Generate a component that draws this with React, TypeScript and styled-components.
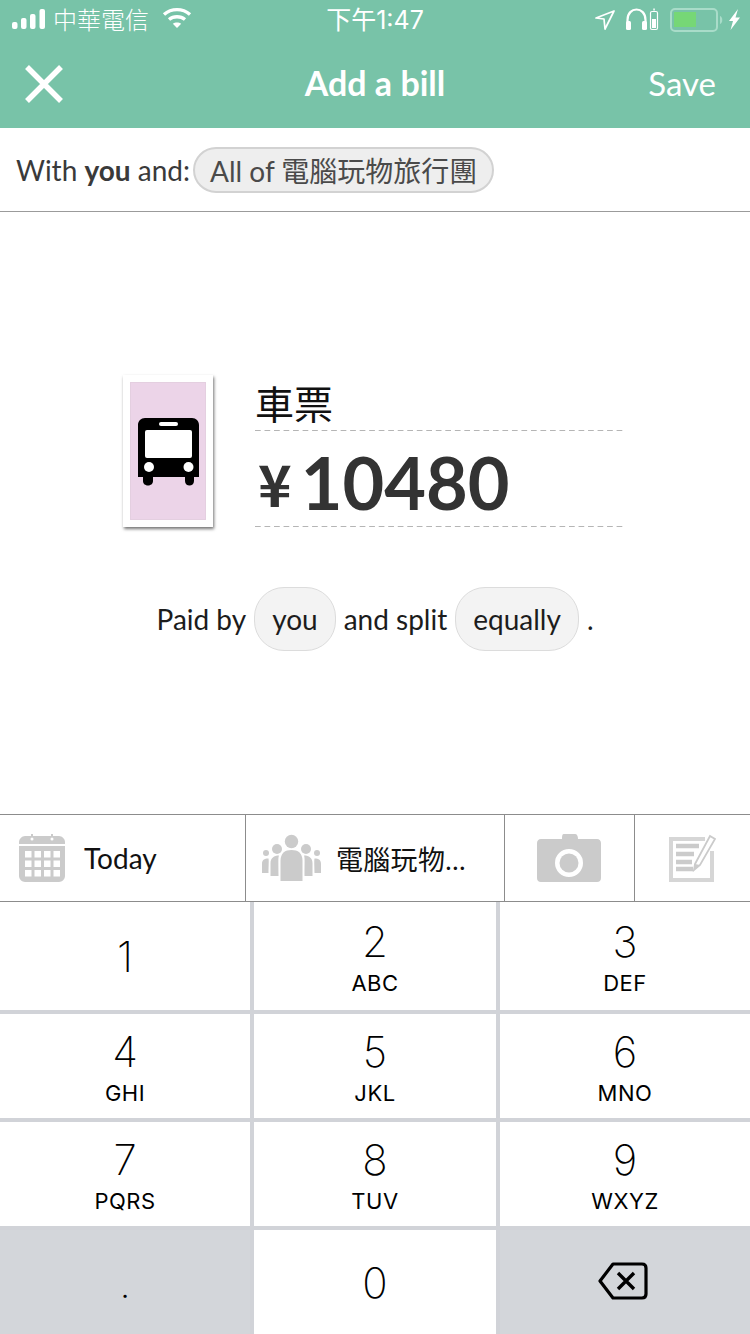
import React from 'react'
import styled, { createGlobalStyle } from 'styled-components'

const CJK = '"Noto Sans CJK TC"'

const GlobalStyle = createGlobalStyle`
  html, body {
    margin: 0;
    padding: 0;
    background: #fff;
    font-family: Lato, ${CJK}, sans-serif;
  }
`

const Page = styled.div`
  width: 750px;
  height: 1334px;
  display: flex;
  flex-direction: column;
  overflow: hidden;
`

const Header = styled.header`
  height: 128px;
  flex: none;
  background: #78c3a8;
  color: #fff;
`

const StatusBar = styled.div`
  height: 40px;
  display: grid;
  grid-template-columns: 1fr auto 1fr;
  align-items: center;
  padding: 0 12px;
`

const StatusLeft = styled.div`
  display: flex;
  align-items: center;
  gap: 8px;
`

const Carrier = styled.span`
  font-family: ${CJK}, sans-serif;
  font-weight: 300;
  font-size: 24px;
  line-height: 36px;
  margin: 0 6px 2px -1px;
`

const Clock = styled.span`
  font-family: Inter, ${CJK}, sans-serif;
  font-size: 25px;
  font-weight: 400;
  line-height: 36px;
`

const StatusRight = styled.div`
  display: flex;
  justify-content: flex-end;
  align-items: center;
  margin-right: -3px;
`

const NavBar = styled.div`
  height: 88px;
  display: grid;
  grid-template-columns: 1fr auto 1fr;
  align-items: center;
  padding: 0 34px;
`

const CloseButton = styled.span`
  display: flex;
  margin-left: -9px;
`

const Title = styled.h1`
  margin: 0 0 2px;
  font-size: 34px;
  font-weight: 700;
  line-height: 1;
`

const SaveLink = styled.span`
  justify-self: end;
  font-size: 33px;
  font-weight: 400;
  line-height: 1;
  margin-bottom: 2px;
`

const WithRow = styled.div`
  height: 84px;
  box-sizing: border-box;
  flex: none;
  display: flex;
  align-items: center;
  gap: 3px;
  padding: 0 16px;
  border-bottom: 1px solid #9b9b9b;
  font-size: 28px;
  color: #3a3a3a;
`

const GroupChip = styled.span`
  height: 42px;
  display: inline-flex;
  align-items: center;
  padding: 0 15px;
  background: #eeeeee;
  border: 2px solid #d2d2d2;
  border-radius: 23px;
  font-size: 28px;
  color: #4a4a4a;
  white-space: nowrap;
`

const Main = styled.main`
  height: 602px;
  box-sizing: border-box;
  flex: none;
  display: flex;
  flex-direction: column;
  align-items: center;
  padding-top: 163px;
`

const BillRow = styled.div`
  display: flex;
  gap: 42px;
  align-items: flex-start;
  width: 500px;
  margin-right: 4px;
`

const Thumb = styled.div`
  width: 76px;
  height: 138px;
  flex: none;
  padding: 7px;
  background: #fff;
  box-shadow: 1px 2px 3px rgba(0, 0, 0, 0.55);
`

const ThumbInner = styled.div`
  height: 100%;
  display: flex;
  align-items: center;
  justify-content: center;
  padding-top: 2px;
  box-sizing: border-box;
  background: #ecd4e8;
  outline: 1px solid #e4cfe0;
  outline-offset: -1px;
`

const DashedField = styled.div`
  box-sizing: border-box;
  background-image: linear-gradient(to right, #b5b5b5 6px, transparent 6px);
  background-size: 9.526px 1px;
  background-repeat: repeat-x;
  background-position: left bottom;
`

const Fields = styled.div`
  width: 368px;
  display: flex;
  flex-direction: column;
`

const NameField = styled(DashedField)`
  height: 56px;
  font-family: ${CJK}, sans-serif;
  font-size: 39px;
  line-height: 54px;
  color: #111;
`

const AmountField = styled(DashedField)`
  height: 96px;
  display: flex;
  align-items: center;
  padding: 5px 0 0 3px;
  color: #333;
  font-weight: 700;
`

const Currency = styled.span`
  font-family: "Noto Sans CJK JP", sans-serif;
  font-size: 57px;
  font-weight: 700;
  line-height: 1;
  margin: 2px 9px 0 0;
`

const Amount = styled.span`
  font-size: 72px;
  line-height: 1;
`

const SplitRow = styled.div`
  margin-top: 60px;
  display: flex;
  align-items: center;
  gap: 8px;
  font-size: 28px;
  color: #1c1c1c;
`

const SplitChip = styled.span`
  height: 62px;
  display: inline-flex;
  align-items: center;
  padding: 0 17px;
  background: #f3f3f3;
  border: 1px solid #dcdcdc;
  border-radius: 30px;
`

const Toolbar = styled.div`
  height: 88px;
  box-sizing: border-box;
  flex: none;
  display: grid;
  grid-template-columns: 246px 259px 130px 1fr;
  border-top: 1px solid #8c8c8c;
  border-bottom: 1px solid #8c8c8c;
`

const ToolCell = styled.div<{ $center?: boolean }>`
  display: flex;
  align-items: center;
  justify-content: ${p => (p.$center ? 'center' : 'flex-start')};
  border-right: 1px solid #8c8c8c;
  font-size: 28px;
  color: #111;
  white-space: nowrap;
  &:last-child {
    border-right: 0;
  }
`

const DateCell = styled(ToolCell)`
  padding-left: 19px;
  gap: 19px;
`

const GroupCell = styled(ToolCell)`
  padding-left: 16px;
  gap: 15px;
  font-size: 27px;
  letter-spacing: 0.3px;
`

const Keypad = styled.div`
  height: 432px;
  flex: none;
  display: grid;
  grid-template-columns: 250px 242px 250px;
  grid-template-rows: 108px 104px 104px 104px;
  gap: 4px;
  background: #d1d3d8;
`

const Key = styled.div<{ $dark?: boolean }>`
  display: flex;
  flex-direction: column;
  align-items: center;
  justify-content: center;
  padding-top: 2px;
  box-sizing: border-box;
  background: ${p => (p.$dark ? '#d3d6da' : '#fff')};
  color: #000;
  font-family: Inter, sans-serif;
`

const Digit = styled.span`
  font-size: 42px;
  font-weight: 250;
  line-height: 48px;
`

const Letters = styled.span`
  font-size: 22px;
  font-weight: 400;
  line-height: 26px;
  margin-top: 4px;
  letter-spacing: 0.5px;
`

const BackspaceKey = styled(Key)`
  padding: 0 4px 2px 0;
`

const keys = [
  ['1', ''], ['2', 'ABC'], ['3', 'DEF'],
  ['4', 'GHI'], ['5', 'JKL'], ['6', 'MNO'],
  ['7', 'PQRS'], ['8', 'TUV'], ['9', 'WXYZ'],
]

const Signal = () => (
  <svg width="34" height="22" viewBox="0 0 34 22" fill="#fff">
    <rect x="0" y="13" width="5.5" height="7" rx="2" />
    <rect x="9" y="9" width="5.5" height="11" rx="2" />
    <rect x="18" y="5" width="5.5" height="15" rx="2" />
    <rect x="27.5" y="0" width="5.5" height="20" rx="2" />
  </svg>
)

const Wifi = () => (
  <svg width="30" height="22" viewBox="0 0 30 22" fill="none" stroke="#fff" strokeWidth="3.4" style={{ marginBottom: 4, marginLeft: -1 }}>
    <path d="M2 7.5C9.5 1 20.5 1 28 7.5" />
    <path d="M7 12.5C11.5 8.8 18.5 8.8 23 12.5" />
    <path d="M15 21 10.8 16.8C13 15 17 15 19.2 16.8Z" fill="#fff" stroke="none" />
  </svg>
)

const StatusIcons = () => (
  <svg width="146" height="26" viewBox="0 0 146 26" fill="none">
    <path d="M1 11 19 4 10 22 9 12Z" stroke="#fff" strokeWidth="1.7" strokeLinejoin="round" />
    <path d="M32.5 19V13C32.5 -1 50.5 -1 50.5 13V19" stroke="#fff" strokeWidth="2.2" />
    <rect x="31" y="14" width="5" height="9" rx="1.5" fill="#fff" />
    <rect x="47" y="14" width="5" height="9" rx="1.5" fill="#fff" />
    <rect x="55.5" y="4.5" width="7" height="18" rx="1.5" stroke="#fff" strokeWidth="1.2" />
    <rect x="57" y="12" width="4" height="9" fill="#fff" />
    <rect x="58.3" y="1.5" width="1.5" height="2" fill="#fff" />
    <rect x="76" y="2" width="46" height="22" rx="4" stroke="#a9dcc9" strokeWidth="2" />
    <rect x="79" y="5" width="22" height="15" fill="#76d776" />
    <path d="M125 9C128 9.5 128 16.5 125 17Z" fill="#a9dcc9" />
    <path d="M143 2 134 14H138L135.5 23 145 10.5H140.5Z" fill="#fff" />
  </svg>
)

const CloseIcon = () => (
  <svg width="38" height="38" viewBox="0 0 38 38" stroke="#fff" strokeWidth="5.5">
    <path d="M2 2 36 36M36 2 2 36" />
  </svg>
)

const BusIcon = () => (
  <svg width="61" height="68" viewBox="0 0 61 68">
    <path fill="#000" d="M7 0H54C58 0 61 3 61 7V59H56V63C56 69 47 69 47 63V59H15V63C15 69 5 69 5 63V59H0V7C0 3 3 0 7 0Z" />
    <g fill="#fff">
      <rect x="21" y="4" width="19" height="4" rx="2" />
      <rect x="7" y="12" width="47" height="28" rx="2" />
      <circle cx="11" cy="49" r="5" />
      <circle cx="50.5" cy="49" r="5" />
    </g>
  </svg>
)

const CalendarIcon = () => (
  <svg width="46" height="48" viewBox="0 0 46 48" fill="#cbcbcb">
    <path d="M6 2H40C43 2 46 5 46 8V10H0V8C0 5 3 2 6 2Z" />
    <path d="M0 12H46V42C46 45 43 48 40 48H6C3 48 0 45 0 42Z" />
    <rect x="12" y="0" width="2" height="6" />
    <rect x="32" y="0" width="2" height="6" />
    <g fill="#fff">
      {[0, 1, 2, 3].flatMap(c =>
        [0, 1, 2].map(r => (
          <rect key={`${c}-${r}`} x={6 + c * 9.5} y={17 + r * 9.5} width={6.5} height={6.5} />
        )),
      )}
      <circle cx="13" cy="5" r="1.5" />
      <circle cx="33" cy="5" r="1.5" />
    </g>
  </svg>
)

const PeopleIcon = () => (
  <svg width="59" height="48" viewBox="0 0 59 48" fill="#cbcbcb">
    <circle cx="29.5" cy="7.5" r="6.7" />
    <path d="M18.5 47V27C18.5 19 23 16 29.5 16C36 16 40.5 19 40.5 27V47Z" />
    <circle cx="15" cy="15" r="5" />
    <circle cx="44" cy="15" r="5" />
    <path d="M8.5 42V29C8.5 24 12 21.5 17 21.5C16 24 16.5 28 16.5 42Z" />
    <path d="M50.5 42V29C50.5 24 47 21.5 42 21.5C43 24 42.5 28 42.5 42Z" />
    <circle cx="4" cy="19" r="3" />
    <circle cx="55" cy="19" r="3" />
    <path d="M0 39V30C0 26 2 24.5 6.5 24.5C7 27 6.5 33 6.5 39Z" />
    <path d="M59 39V30C59 26 57 24.5 52.5 24.5C52 27 52.5 33 52.5 39Z" />
  </svg>
)

const CameraIcon = () => (
  <svg width="64" height="48" viewBox="0 0 64 48" fill="#cbcbcb" style={{ marginRight: 1 }}>
    <path fillRule="evenodd" d="M27 0H38C40 0 41 2 41 5H60C62.5 5 64 7 64 9V44C64 46.5 62.5 48 60 48H4C1.5 48 0 46.5 0 44V9C0 7 1.5 5 4 5H25C25 2 25 0 27 0ZM32 15A14 14 0 1 0 32 43 14 14 0 1 0 32 15Z" />
    <circle cx="32" cy="29" r="9.5" />
  </svg>
)

const NoteIcon = () => (
  <svg width="47" height="48" viewBox="0 0 47 48" fill="none">
    <path d="M36 5H2V46H43V17" stroke="#d6d6d6" strokeWidth="4" />
    <path d="M7 12H30M7 20H25M7 28H23M7 35H24" stroke="#cbcbcb" strokeWidth="4.5" />
    <path d="M26 30 41 2 46 5 31 31 25 36Z" fill="#fff" stroke="#cbcbcb" strokeWidth="1.8" />
    <path d="M26 30 31 31 25 36Z" fill="#cbcbcb" />
  </svg>
)

const BackspaceIcon = () => (
  <svg width="50" height="38" viewBox="0 0 50 38" fill="none" stroke="#000" strokeWidth="3.2" strokeLinejoin="round">
    <path d="M15 2H44C46.5 2 48 3.5 48 6V32C48 34.5 46.5 36 44 36H15L2 19Z" />
    <path d="M20 11 36 27M36 11 20 27" strokeWidth="3.4" />
  </svg>
)

const App: React.FC = () => {
  return (
    <Page>
      <GlobalStyle />
      <Header>
        <StatusBar>
          <StatusLeft>
            <Signal />
            <Carrier>中華電信</Carrier>
            <Wifi />
          </StatusLeft>
          <Clock>下午1:47</Clock>
          <StatusRight>
            <StatusIcons />
          </StatusRight>
        </StatusBar>
        <NavBar>
          <CloseButton>
            <CloseIcon />
          </CloseButton>
          <Title>Add a bill</Title>
          <SaveLink>Save</SaveLink>
        </NavBar>
      </Header>

      <WithRow>
        <span>
          With <b>you</b> and:
        </span>
        <GroupChip>All of 電腦玩物旅行團</GroupChip>
      </WithRow>

      <Main>
        <BillRow>
          <Thumb>
            <ThumbInner>
              <BusIcon />
            </ThumbInner>
          </Thumb>
          <Fields>
            <NameField>車票</NameField>
            <AmountField>
              <Currency>¥</Currency>
              <Amount>10480</Amount>
            </AmountField>
          </Fields>
        </BillRow>
        <SplitRow>
          <span>Paid by</span>
          <SplitChip>you</SplitChip>
          <span>and split</span>
          <SplitChip>equally</SplitChip>
          <span>.</span>
        </SplitRow>
      </Main>

      <Toolbar>
        <DateCell>
          <CalendarIcon />
          Today
        </DateCell>
        <GroupCell>
          <PeopleIcon />
          電腦玩物…
        </GroupCell>
        <ToolCell $center>
          <CameraIcon />
        </ToolCell>
        <ToolCell $center>
          <NoteIcon />
        </ToolCell>
      </Toolbar>

      <Keypad>
        {keys.map(([digit, letters]) => (
          <Key key={digit}>
            <Digit>{digit}</Digit>
            {letters && <Letters>{letters}</Letters>}
          </Key>
        ))}
        <Key $dark>
          <Digit>.</Digit>
        </Key>
        <Key>
          <Digit>0</Digit>
        </Key>
        <BackspaceKey $dark>
          <BackspaceIcon />
        </BackspaceKey>
      </Keypad>
    </Page>
  )
}

export default App
